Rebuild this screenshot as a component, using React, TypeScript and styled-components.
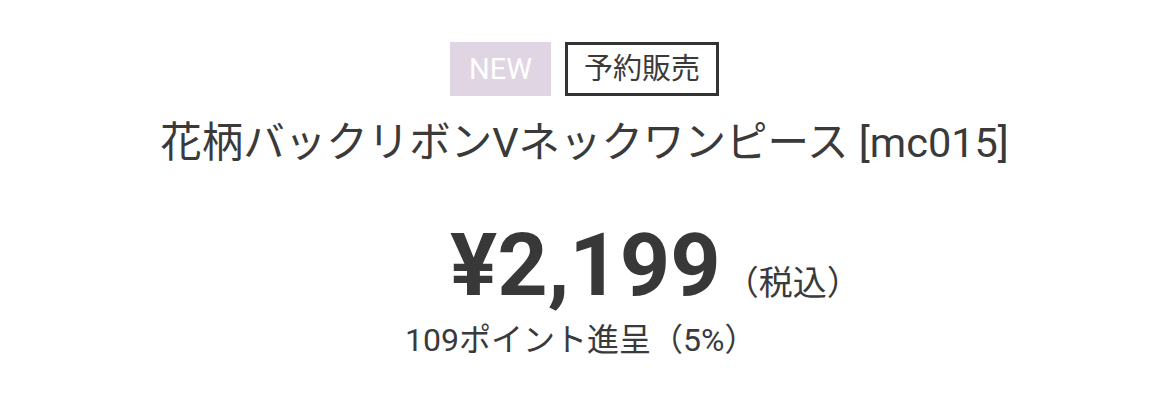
import React from "react";
import styled, { createGlobalStyle } from "styled-components";

const Global = createGlobalStyle`
  html, body { margin: 0; padding: 0; background: #fff; }
  body { font-family: Roboto, "Noto Sans CJK JP", sans-serif; color: #3a3a3a; }
`;

const Page = styled.div`
  width: 1169px;
  height: 401px;
  display: flex;
  flex-direction: column;
  align-items: center;
  padding-top: 42px;
  box-sizing: border-box;
`;

const Badges = styled.div`
  display: flex;
  gap: 14px;
  align-items: stretch;
`;

const Badge = styled.span<{ $variant: "new" | "outline" }>`
  display: flex;
  align-items: center;
  justify-content: center;
  box-sizing: border-box;
  height: 54px;
  font-size: 29px;
  font-weight: 400;
  line-height: 1;
  ${(p) =>
    p.$variant === "new"
      ? `width: 101px; background: #e0d5e3; color: #fff;`
      : `width: 154px; border: 3px solid #333; color: #3a3a3a; background: #fff;`}
`;

const Title = styled.h1`
  margin: 20px 0 0;
  font-weight: 400;
  font-size: 41.5px;
  line-height: 54px;
  color: #3a3a3a;
  white-space: nowrap;
`;

const PriceArea = styled.div`
  align-self: stretch;
  display: flex;
  flex-direction: column;
  margin-top: 55px;
  padding-left: 405px;
`;

const PriceRow = styled.div`
  display: flex;
  align-items: baseline;
  padding-left: 45px;
`;

const Price = styled.span`
  font-size: 88px;
  font-weight: 700;
  line-height: 80px;
  color: #383838;
`;

const Tax = styled.span`
  font-size: 34px;
  font-weight: 400;
  margin-left: 4px;
  color: #3a3a3a;
`;

const Points = styled.div`
  font-size: 32px;
  font-weight: 400;
  line-height: 40px;
  margin-top: 15px;
  color: #3a3a3a;
`;

export default function App() {
  return (
    <>
      <Global />
      <Page>
        <Badges>
          <Badge $variant="new">NEW</Badge>
          <Badge $variant="outline">予約販売</Badge>
        </Badges>
        <Title>花柄バックリボンVネックワンピース [mc015]</Title>
        <PriceArea>
          <PriceRow>
            <Price>¥2,199</Price>
            <Tax>（税込）</Tax>
          </PriceRow>
          <Points>109ポイント進呈（5%）</Points>
        </PriceArea>
      </Page>
    </>
  );
}
